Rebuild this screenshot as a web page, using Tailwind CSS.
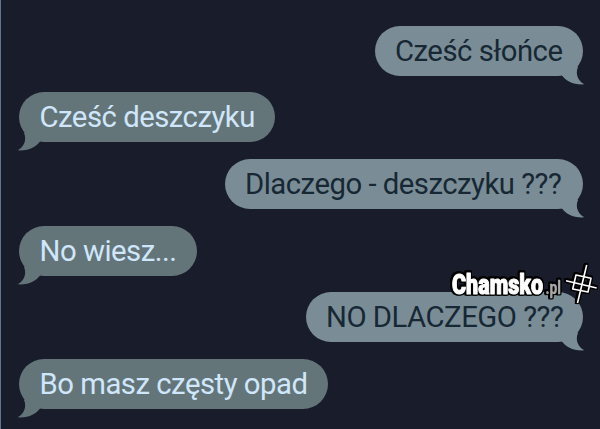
<!DOCTYPE html>
<html lang="pl">
  <head>
    <meta charset="UTF-8" />
    <meta name="viewport" content="width=device-width, initial-scale=1.0" />
    <title>Cześć słońce</title>
    <script src="https://cdn.jsdelivr.net/npm/@tailwindcss/browser@4"></script>
  </head>
  <body class="bg-[#191c2b] overflow-hidden">
    <main
      class="relative w-[600px] h-[429px] overflow-hidden border-l border-[#62748a] pt-[25.7px] pl-[18px] pr-[17px] flex flex-col gap-[16.7px] font-['Roboto',sans-serif] font-normal text-[29.3px] tracking-[-0.5px] leading-[50px] whitespace-nowrap"
    >
      <!-- Messages -->
      <div class="relative self-end w-[208px] h-[50px] shrink-0 rounded-full bg-[#7a8d96] text-[#172834] pl-[20px]">
        Cześć słońce
        <svg class="absolute -right-[2px] top-[34px]" width="26" height="25" viewBox="0 0 26 25" fill="#7a8d96">
          <path d="M3 15.5C7 21 14 25 25.5 24.3C19 21 16 14 19 7L12 0L2 10Z" />
        </svg>
      </div>
      <div class="relative self-start w-[256px] h-[50px] shrink-0 rounded-full bg-[#637579] text-[#d0e6fa] pl-[20.5px]">
        Cześć deszczyku
        <svg class="absolute -left-[2px] top-[34px]" width="26" height="25" viewBox="0 0 26 25" fill="#637579">
          <path d="M23 15.5C19 21 12 25 0.5 24.3C7 21 10 14 7 7L14 0L24 10Z" />
        </svg>
      </div>
      <div class="relative self-end w-[358px] h-[50px] shrink-0 rounded-full bg-[#7a8d96] text-[#172834] pl-[20px]">
        Dlaczego - deszczyku ???
        <svg class="absolute -right-[2px] top-[34px]" width="26" height="25" viewBox="0 0 26 25" fill="#7a8d96">
          <path d="M3 15.5C7 21 14 25 25.5 24.3C19 21 16 14 19 7L12 0L2 10Z" />
        </svg>
      </div>
      <div class="relative self-start w-[178px] h-[50px] shrink-0 rounded-full bg-[#637579] text-[#d0e6fa] pl-[20.5px]">
        No wiesz...
        <svg class="absolute -left-[2px] top-[34px]" width="26" height="25" viewBox="0 0 26 25" fill="#637579">
          <path d="M23 15.5C19 21 12 25 0.5 24.3C7 21 10 14 7 7L14 0L24 10Z" />
        </svg>
      </div>
      <div class="relative self-end w-[277px] h-[50px] shrink-0 rounded-full bg-[#7a8d96] text-[#172834] pl-[20px]">
        NO DLACZEGO ???
        <svg class="absolute -right-[2px] top-[34px]" width="26" height="25" viewBox="0 0 26 25" fill="#7a8d96">
          <path d="M3 15.5C7 21 14 25 25.5 24.3C19 21 16 14 19 7L12 0L2 10Z" />
        </svg>
      </div>
      <div class="relative self-start w-[309px] h-[50px] shrink-0 rounded-full bg-[#637579] text-[#d0e6fa] pl-[20.5px]">
        Bo masz częsty opad
        <svg class="absolute -left-[2px] top-[34px]" width="26" height="25" viewBox="0 0 26 25" fill="#637579">
          <path d="M23 15.5C19 21 12 25 0.5 24.3C7 21 10 14 7 7L14 0L24 10Z" />
        </svg>
      </div>

      <!-- Watermark -->
      <svg
        class="absolute left-[444px] top-[260px] font-['Roboto',sans-serif] tracking-normal [filter:drop-shadow(1.3px_0_0_#000)_drop-shadow(-1.3px_0_0_#000)_drop-shadow(0_1.3px_0_#000)_drop-shadow(0_-1.3px_0_#000)]"
        width="155"
        height="48"
        viewBox="445 260 155 48"
        stroke-linejoin="round"
      >
        <text x="452" y="293.5" font-size="27" font-weight="900" fill="#fff" stroke="#fff" stroke-width="1" textLength="91" lengthAdjust="spacingAndGlyphs">Chamsko</text>
        <text x="545.5" y="293.5" font-size="19" font-weight="700" fill="#a8a8a8" stroke="#a8a8a8" stroke-width="0.4" textLength="15.5" lengthAdjust="spacingAndGlyphs">.pl</text>
        <path d="M586.7 265L577.5 303M566 280.7L596.7 288M576 275L591 278.3L588 292L572.7 289Z" fill="none" stroke="#fff" stroke-width="1.6" />
      </svg>
    </main>
  </body>
</html>
